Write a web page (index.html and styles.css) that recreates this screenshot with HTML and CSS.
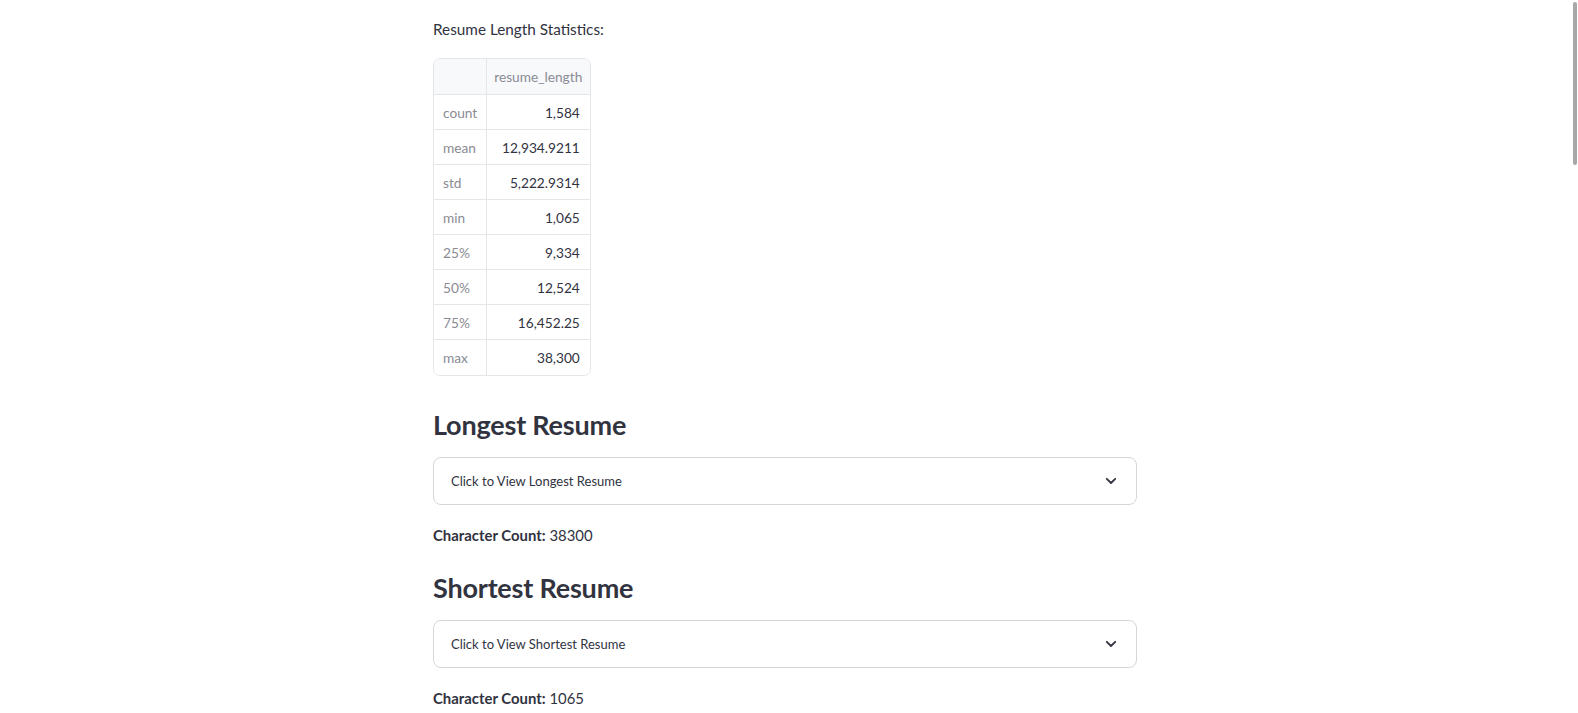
FILE: index.html
```html
<!DOCTYPE html>
<html lang="en">
<head>
<meta charset="utf-8">
<title>Resume Length Statistics</title>
<link rel="stylesheet" href="styles.css">
</head>
<body>
<div class="app">
  <main class="block">
    <p class="text">Resume Length Statistics:</p>
    <div class="table-wrap">
      <table class="stats">
        <thead>
          <tr><th class="idx"></th><th class="col">resume_length</th></tr>
        </thead>
        <tbody>
          <tr><td class="idx">count</td><td class="val">1,584</td></tr>
          <tr><td class="idx">mean</td><td class="val">12,934.9211</td></tr>
          <tr><td class="idx">std</td><td class="val">5,222.9314</td></tr>
          <tr><td class="idx">min</td><td class="val">1,065</td></tr>
          <tr><td class="idx">25%</td><td class="val">9,334</td></tr>
          <tr><td class="idx">50%</td><td class="val">12,524</td></tr>
          <tr><td class="idx">75%</td><td class="val">16,452.25</td></tr>
          <tr><td class="idx">max</td><td class="val">38,300</td></tr>
        </tbody>
      </table>
    </div>
    <h3 class="heading heading-first">Longest Resume</h3>
    <div class="expander">
      <span class="exp-label">Click to View Longest Resume</span>
      <svg class="chev" width="12" height="8" viewBox="0 0 12 8"><path d="M1.8 1.8 L6 6 L10.2 1.8" fill="none" stroke="#31333f" stroke-width="1.8" stroke-linecap="round" stroke-linejoin="round"/></svg>
    </div>
    <p class="text count"><strong>Character Count:</strong> 38300</p>
    <h3 class="heading">Shortest Resume</h3>
    <div class="expander">
      <span class="exp-label">Click to View Shortest Resume</span>
      <svg class="chev" width="12" height="8" viewBox="0 0 12 8"><path d="M1.8 1.8 L6 6 L10.2 1.8" fill="none" stroke="#31333f" stroke-width="1.8" stroke-linecap="round" stroke-linejoin="round"/></svg>
    </div>
    <p class="text count"><strong>Character Count:</strong> 1065</p>
  </main>
</div>
<div class="scroll-thumb"></div>
</body>
</html>
```
FILE: styles.css
```css
html, body {
  margin: 0;
  padding: 0;
  height: 100%;
  overflow: hidden;
  background: #ffffff;
}
body {
  font-family: "Lato", "Liberation Sans", sans-serif;
  color: #31333f;
}
.app {
  display: flex;
  justify-content: center;
  padding-right: 8px;
}
.block {
  width: 704px;
  display: flex;
  flex-direction: column;
  align-items: flex-start;
  padding-top: 17px;
}
.text {
  margin: 0;
  font-size: 15.3px;
  line-height: 25.6px;
}
.table-wrap {
  margin-top: 15px;
  border: 1px solid #e6e6ea;
  border-radius: 7px;
  overflow: hidden;
}
.stats {
  border-collapse: collapse;
  table-layout: fixed;
  font-size: 13.7px;
}
.stats th, .stats td {
  height: 35px;
  padding: 0 9px;
  border-right: 1px solid #e6e6ea;
  border-bottom: 1px solid #e6e6ea;
  font-weight: 400;
  white-space: nowrap;
  box-sizing: border-box;
}
.stats thead th { height: 36px; }
.stats tr > :last-child { border-right: none; }
.stats tbody tr:last-child td { border-bottom: none; }
.stats thead th {
  background: #f8f9fb;
  color: #8a8b93;
}
.stats th.col {
  width: 103px;
  text-align: left;
  padding-left: 7px;
  padding-right: 7px;
}
.stats .idx {
  width: 50px;
  text-align: left;
  color: #8a8b93;
  background: #f8f9fb;
}
.stats td.idx { background: #ffffff; }
.stats td.val {
  text-align: right;
  padding-right: 10px;
  color: #31333f;
}
.heading {
  margin: 23px 0 0;
  font-size: 27px;
  font-weight: 700;
  line-height: 34px;
  letter-spacing: -0.2px;
}
.heading-first { margin-top: 32px; }
.expander {
  margin-top: 15px;
  box-sizing: border-box;
  width: 704px;
  height: 48px;
  border: 1px solid #d6d6d9;
  border-radius: 8px;
  display: flex;
  align-items: center;
  justify-content: space-between;
  padding: 0 16px 0 17px;
}
.exp-label {
  font-size: 13px;
}
.chev { display: block; margin-right: 3px; }
.count { margin-top: 18px; font-size: 14.9px; }
.count strong { font-weight: 700; }
.scroll-thumb {
  position: fixed;
  top: 2px;
  right: 1px;
  width: 4px;
  height: 163px;
  border-radius: 2px;
  background: #a8a8a8;
}
```
